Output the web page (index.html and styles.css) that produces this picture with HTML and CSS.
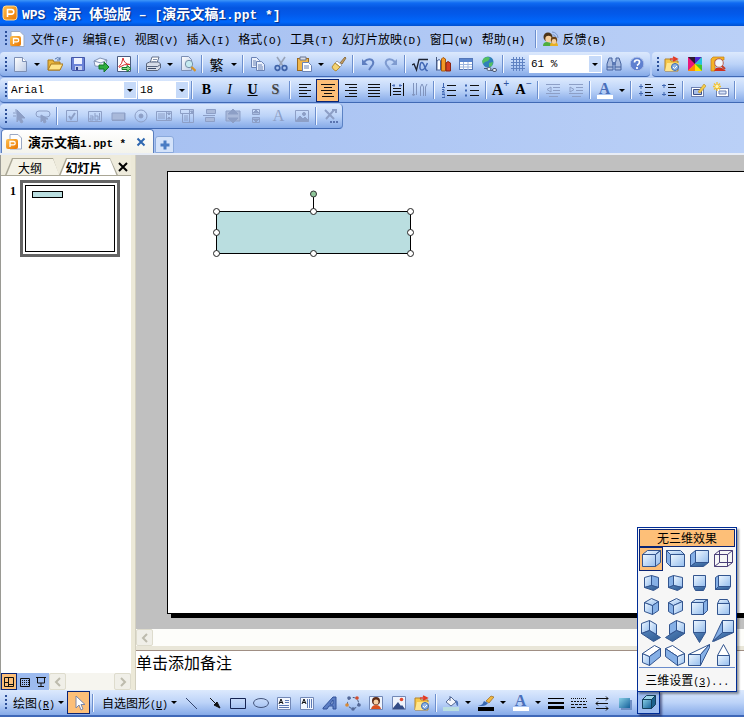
FILE: index.html
```html
<!DOCTYPE html>
<html lang="zh-CN">
<head>
<meta charset="UTF-8">
<meta name="viewport" content="width=device-width, initial-scale=1.0">
<title>WPS 演示</title>
<link rel="stylesheet" href="styles.css">
</head>
<body>

<!-- shared gradients -->
<svg class="defs" width="0" height="0" aria-hidden="true">
	<defs>
		<linearGradient id="face" x1="0" y1="0" x2="1" y2="1"><stop offset="0" stop-color="#f0f8ff"/><stop offset="1" stop-color="#94bdee"/></linearGradient>
		<linearGradient id="dark" x1="0" y1="0" x2="1" y2="1"><stop offset="0" stop-color="#5585bd"/><stop offset="1" stop-color="#2d588f"/></linearGradient>
		<linearGradient id="orange" x1="0" y1="0" x2="1" y2="1"><stop offset="0" stop-color="#ffc04d"/><stop offset="1" stop-color="#e87400"/></linearGradient>
		<linearGradient id="paper" x1="0" y1="0" x2="1" y2="1"><stop offset="0" stop-color="#fff"/><stop offset="1" stop-color="#bccbe6"/></linearGradient>
		<linearGradient id="teal" x1="0" y1="0" x2="1" y2="1"><stop offset="0" stop-color="#8ad0e6"/><stop offset="1" stop-color="#14609a"/></linearGradient>
	</defs>
</svg>

<header class="titlebar">
	<svg viewBox="0 0 16 16"><rect x="1" y="1" width="14" height="14" rx="3" fill="url(#orange)" stroke="#ffd890"/><path d="M5.500 12V4.500h4a2.300 2.300 0 0 1 0 4.600H5.500" fill="none" stroke="#fff" stroke-width="1.600"/></svg>
	<h1><span class="en">WPS </span>演示<span class="en"> </span>体验版<span class="en"> – [</span>演示文稿<span class="en">1.ppt *]</span></h1>
</header>

<nav class="menubar">
	<span class="grip"></span>
	<svg class="doc-icon" viewBox="0 0 16 16"><path d="M2 .5h9l4 4v11H2z" fill="#fff" stroke="#9aa8c4"/><rect x="1" y="5" width="11" height="10" rx="2" fill="url(#orange)"/><path d="M4.500 13V7.500H8a1.700 1.700 0 0 1 0 3.400H4.500" fill="none" stroke="#fff" stroke-width="1.300"/></svg>
	<button>文件<span class="key">(F)</span></button>
	<button>编辑<span class="key">(E)</span></button>
	<button>视图<span class="key">(V)</span></button>
	<button>插入<span class="key">(I)</span></button>
	<button>格式<span class="key">(O)</span></button>
	<button>工具<span class="key">(T)</span></button>
	<button>幻灯片放映<span class="key">(D)</span></button>
	<button>窗口<span class="key">(W)</span></button>
	<button>帮助<span class="key">(H)</span></button>
	<span class="sep"></span>
	<button class="feedback"><svg viewBox="0 0 16 16"><path d="M9 1a6 6 0 0 1 6 6M9.500 3.500A4 4 0 0 1 13 7" fill="none" stroke="#7895c8"/><path d="M0 15q0-4 4-4t5 4z" fill="#4fae3c"/><path d="M7 15q0-4 4-4t4 4z" fill="#e8b020"/><circle cx="5" cy="6" r="4.500" fill="#4d3418"/><circle cx="5.500" cy="8" r="3.200" fill="#f6cf9c"/><circle cx="11" cy="9" r="3.200" fill="#6b4418"/><circle cx="11" cy="10.500" r="2.400" fill="#f6cf9c"/></svg><span>反馈<span class="key">(B)</span></span></button>
</nav>

<!-- standard toolbar -->
<div class="row">
<div class="toolbar">
	<span class="grip"></span>
	<button class="tb" aria-label="新建"><svg viewBox="0 0 16 16"><path d="M2.500 1.500h8l4 4v10h-12z" fill="url(#paper)" stroke="#7c8fb4"/><path d="M10.500 1.500v4h4" fill="#fff" stroke="#7c8fb4"/></svg></button>
	<button class="drop" aria-label="新建选项"></button>
	<button class="tb" aria-label="打开"><svg viewBox="0 0 16 16"><path d="M1 14V4h5l1 2h6v8z" fill="#e9b53c" stroke="#a9781c"/><path d="M1 14l3-6h12l-3 6z" fill="#ffe48a" stroke="#a9781c"/><path d="M8 3q3-3 5 0m0-2v3h-3" fill="none" stroke="#5677aa"/></svg></button>
	<button class="tb" aria-label="保存"><svg viewBox="0 0 16 16"><path d="M1.500 1.500h13v13h-12l-1-1z" fill="#6c84d8" stroke="#4558a8"/><path d="M4 2h8v6H4z" fill="#eef2ff"/><path d="M5 10h7v4H5z" fill="#c9d2ee"/><path d="M6 11h2v3H6z" fill="#33448c"/></svg></button>
	<button class="tb" aria-label="邮件"><svg viewBox="0 0 16 16"><path d="M1 5l6-3 7 2-2 7-10-1z" fill="#f6f9ff" stroke="#8193b5"/><path d="M1 5l7 2 6-3" fill="none" stroke="#8193b5"/><path d="M6 9h5V6l5 5-5 5v-3H6z" fill="#2fae3e" stroke="#127526"/></svg></button>
	<button class="tb" aria-label="输出为PDF"><svg viewBox="0 0 16 16"><path d="M1.500.5h13v15h-13z" fill="#fff" stroke="#4b5c80"/><path d="M2.500 11q4-3 4.500-9 1 6 7 6.500-6-1-11 3" fill="none" stroke="#d92b2b"/><path d="M6 11.500h5v-2l4 3-4 3v-2H6z" fill="#8fdc8c" stroke="#137a28"/></svg></button>
	<span class="sep"></span>
	<button class="tb" aria-label="打印"><svg viewBox="0 0 16 16"><path d="M5 7l2-6h7l-2 6" fill="#fff" stroke="#66728a"/><path d="M1.500 7.500l3-1.500h9l2 2v4l-3 2.500h-11z" fill="#d6dce8" stroke="#59657d"/><path d="M1.500 10.500h11l3-2" fill="none" stroke="#59657d"/><path d="M3 12.500h8" stroke="#3a4a68"/><path d="M8 3.500h4M7 5.500h4" stroke="#8794ad"/></svg></button>
	<button class="drop" aria-label="打印选项"></button>
	<button class="tb" aria-label="打印预览"><svg viewBox="0 0 16 16"><path d="M1.500.5h7l3 3v11h-10z" fill="url(#paper)" stroke="#7c8fb4"/><circle cx="9" cy="8" r="3.700" fill="#c5eaf0" stroke="#7690a8"/><path d="M11.500 11l4 4" stroke="#d59429" stroke-width="2.300"/></svg></button>
	<span class="sep"></span>
	<button class="tb glyph">繁</button>
	<button class="drop" aria-label="转换选项"></button>
	<span class="sep"></span>
	<button class="tb" aria-label="复制"><svg viewBox="0 0 16 16" fill="#e9effb" stroke="#6b83b5"><path d="M1.500 1.500h5l3 3v7h-8z"/><path d="M6.500 5.500h5l3 3v6h-8z"/><path d="M3 5h3M3 7h3M3 9h3M8 9h4M8 11h5M8 13h5" fill="none"/></svg></button>
	<button class="tb" aria-label="剪切"><svg viewBox="0 0 16 16" fill="none"><path d="M4 1l6 9M12 1L6 10" stroke="#98a3b8" stroke-width="1.600"/><circle cx="4.500" cy="12" r="2.300" stroke="#3e62a8" stroke-width="1.700"/><circle cx="11.500" cy="12" r="2.300" stroke="#3e62a8" stroke-width="1.700"/></svg></button>
	<button class="tb" aria-label="粘贴"><svg viewBox="0 0 16 16"><rect x="1.500" y="2.500" width="11" height="12" fill="#f0b64a" stroke="#9a6a22"/><path d="M4 1h6v3H4z" fill="#d8dde8" stroke="#6b7690"/><path d="M6.500 6.500h6l3 3v6h-9z" fill="#fff" stroke="#6b83b5"/><path d="M8 10h5M8 12h5" stroke="#6b83b5"/></svg></button>
	<button class="drop" aria-label="粘贴选项"></button>
	<button class="tb" aria-label="格式刷"><svg viewBox="0 0 16 16"><path d="M14 1l1 1-4 6-2-1z" fill="#c9a060" stroke="#8d7044"/><path d="M6 5l5 4-2 2-5-4z" fill="#fff" stroke="#9aa0ae"/><path d="M4 7l5 4-4 4q-3-1-4-4z" fill="#f3d373" stroke="#b48d35"/></svg></button>
	<span class="sep"></span>
	<button class="tb" aria-label="撤销"><svg viewBox="0 0 16 16"><path d="M4 6q4-4 8-2 3 3-1 7l-2 3" fill="none" stroke="#5f7fc0" stroke-width="2"/><path d="M2 3v6h6z" fill="#5f7fc0"/></svg></button>
	<button class="tb" aria-label="恢复"><svg viewBox="0 0 16 16"><path d="M12 6q-4-4-8-2-3 3 1 7l2 3" fill="none" stroke="#7f9bd0" stroke-width="2"/><path d="M14 3v6H8z" fill="#7f9bd0"/></svg></button>
	<span class="sep"></span>
	<button class="tb" aria-label="公式"><svg viewBox="0 0 16 16" fill="none"><path d="M0 9l2-1 2.500 6L7 3.500h9" stroke="#1c2230" stroke-width="1.300"/><path d="M15.500 7q-3 7-5.500 7t-2-4 2-3.500 3 5 2.500 2.500" stroke="#4368b5" stroke-width="1.500"/></svg></button>
	<button class="tb" aria-label="图表"><svg viewBox="0 0 16 16"><path d="M1.500 1v13.500" stroke="#4a5878"/><path d="M2 5l2-1.500 1.500 1V14H2z" fill="#fff" stroke="#48639a"/><path d="M6.500 3L8 1.500 10.500 3v12h-4z" fill="#f29a27" stroke="#a85a10"/><path d="M11 7l2-1.500L15.500 7v8H11z" fill="#d43e24" stroke="#8a2410"/></svg></button>
	<button class="tb" aria-label="表格"><svg viewBox="0 0 16 16"><rect x="1.500" y="2.500" width="13" height="11" fill="#fff" stroke="#5477b8"/><path d="M2 3h12v3H2z" fill="#5c86cf"/><path d="M2 8.500h12M2 11h12M5.500 6v8M10 6v8" stroke="#9db5de"/></svg></button>
	<button class="tb" aria-label="超链接"><svg viewBox="0 0 16 16"><circle cx="7" cy="6" r="5.500" fill="#2f7fb8"/><path d="M3 2q4-2 6 0l-2 3-3 1-2 2-1-3zM8 7l4-1-1 4-3 1z" fill="#54c061"/><path d="M3 12.500h4M9 14.500h5" stroke="#4b5872" stroke-width="1"/><rect x="6" y="11.500" width="4" height="3" rx="1.500" fill="#e8ecf5" stroke="#4b5872"/><rect x="11.500" y="12.500" width="4" height="3" rx="1.500" fill="#e8ecf5" stroke="#4b5872"/></svg></button>
	<span class="sep"></span>
	<button class="tb" aria-label="网格"><svg viewBox="0 0 16 16"><path d="M3.500 1v14M6.500 1v14M9.500 1v14M12.500 1v14M1 3.500h14M1 6.500h14M1 9.500h14M1 12.500h14" stroke="#5f82c2"/></svg></button>
	<label class="combo zoom"><select aria-label="显示比例"><option>61 %</option></select><i></i></label>
	<button class="tb" aria-label="查找"><svg viewBox="0 0 16 16"><path d="M3 2h3v3l1 2v7H1V8zM10 2h3l2 6v6H9V7l1-2z" fill="#a9bce0" stroke="#45639f"/><path d="M6 6h4v3H6z" fill="#5c79b4"/><path d="M1 11h6M9 11h6" stroke="#45639f"/></svg></button>
	<button class="tb" aria-label="帮助"><svg viewBox="0 0 16 16"><circle cx="8" cy="8" r="6.800" fill="#5f80d0" stroke="#a9bde8"/><path d="M5.500 6.500q0-2.500 2.500-2.500t2.500 2-2.500 3.500M8 11v2" fill="none" stroke="#fff" stroke-width="1.700"/></svg></button>
</div>
<div class="toolbar grow">
	<span class="grip"></span>
	<button class="tb" aria-label="素材库"><svg viewBox="0 0 16 16"><path d="M1 15V3h5l1 2h7v10z" fill="#f7c84a" stroke="#b3832a"/><path d="M1 15l2-8h12l-2 8z" fill="#ffe58c"/><path d="M6 3h6M9 1l4 2-4 2" fill="none" stroke="#e23c26" stroke-width="1.500"/><circle cx="11" cy="11" r="3.500" fill="#8fb4e4" stroke="#3d6ab0"/><path d="M9 11l1.500 1.500L13 10" fill="none" stroke="#fff"/></svg></button>
	<button class="tb" aria-label="配色方案"><svg viewBox="0 0 16 16"><path d="M1 1h14v14H1z" fill="#ffe400"/><path d="M1 1h7v7L1 15z" fill="#e9177c"/><path d="M8 1h7L8 8z" fill="#4b28d0"/><path d="M1 1h7v7z" fill="#2b1a30"/><path d="M15 1v8L8 8z" fill="#22c2e0"/><path d="M15 9v6L8 8z" fill="#43c42d"/><path d="M1 15l7-7v7z" fill="#ff8a00"/></svg></button>
	<button class="tb" aria-label="搜索模板"><svg viewBox="0 0 16 16"><path d="M1 15V3l2-2h11v3H5v11z" fill="#f5b326" stroke="#c47f12" stroke-width=".7"/><path d="M4 15l2-3h6l4 3z" fill="#cf2f1e"/><circle cx="9" cy="7" r="4.300" fill="#f1f5fb" stroke="#b86050"/><path d="M12 10l3 3" stroke="#c74028" stroke-width="2"/></svg></button>
</div>
</div>

<!-- format toolbar -->
<div class="row">
<div class="toolbar grow">
	<span class="grip"></span>
	<label class="combo font"><select aria-label="字体"><option>Arial</option></select><i></i></label>
	<label class="combo size"><select aria-label="字号"><option>18</option></select><i></i></label>
	<span class="sep"></span>
	<button class="tb letter"><b>B</b></button>
	<button class="tb letter"><em>I</em></button>
	<button class="tb letter"><b><u>U</u></b></button>
	<button class="tb letter shade"><b>S</b></button>
	<span class="sep"></span>
	<button class="tb" aria-label="左对齐"><svg class="ink" viewBox="0 0 16 16"><path d="M2 2.500h12M2 5.500h8M2 8.500h12M2 11.500h8M2 14.500h12"/></svg></button>
	<button class="tb on" aria-label="居中"><svg class="ink" viewBox="0 0 16 16"><path d="M1 2.500h14M4 5.500h8M1 8.500h14M4 11.500h8M2 14.500h12"/></svg></button>
	<button class="tb" aria-label="右对齐"><svg class="ink" viewBox="0 0 16 16"><path d="M2 2.500h12M6 5.500h8M2 8.500h12M6 11.500h8M2 14.500h12"/></svg></button>
	<button class="tb" aria-label="两端对齐"><svg class="ink" viewBox="0 0 16 16"><path d="M2 2.500h12M2 5.500h12M2 8.500h12M2 11.500h12M2 14.500h12"/></svg></button>
	<button class="tb" aria-label="分散对齐"><svg class="ink" viewBox="0 0 16 16"><path d="M1.500 1v13M14.500 1v13M4 6.500h8M4 9.500h8M4 12.500h8"/><path d="M3 3.500h3M10 3.500h3M5 2v3M11 2v3" stroke="#4a6db5"/></svg></button>
	<button class="tb" aria-label="文字方向"><svg viewBox="0 0 16 16" fill="none" stroke="#8194bd"><path d="M1.500 1v12M4.500 1v12M8.500 14V5l1.500-3 1.500 3v9M13.500 14V5L15 2M0 12l1.500 2L3 12"/></svg></button>
	<span class="sep"></span>
	<button class="tb" aria-label="编号"><svg class="ink" viewBox="0 0 16 16"><path d="M6 3.500h9M6 8.500h9M6 13.500h9"/><path d="M2.500 1v4M1 5.500h3M1 7.500h2v2H1m0 1.500h3M1 12.500h3M3 14h1M1 15.500h3" stroke="#3f66b2"/></svg></button>
	<button class="tb" aria-label="项目符号"><svg class="ink" viewBox="0 0 16 16"><path d="M6 3.500h9M6 8.500h9M6 13.500h9"/><path d="M1 3.500h2M1 8.500h2M1 13.500h2" stroke="#3f66b2" stroke-width="2"/></svg></button>
	<span class="sep"></span>
	<button class="tb letter big"><b>A</b><sup>+</sup></button>
	<button class="tb letter"><b>A</b><sup>−</sup></button>
	<span class="sep"></span>
	<button class="tb" aria-label="减少缩进" disabled><svg class="dim" viewBox="0 0 16 16"><path d="M1 2.500h14M8 5.500h7M8 8.500h7M1 11.500h14M4 14.500h9M6 5L2 7.500 6 10z"/></svg></button>
	<button class="tb" aria-label="增加缩进" disabled><svg class="dim" viewBox="0 0 16 16"><path d="M1 2.500h14M8 5.500h7M8 8.500h7M1 11.500h14M4 14.500h9M2 5l4 2.500L2 10z"/></svg></button>
	<span class="sep"></span>
	<button class="tb colour" aria-label="字体颜色"><span>A</span></button>
	<button class="drop" aria-label="字体颜色选项"></button>
	<span class="sep"></span>
	<button class="tb" aria-label="增加段落间距"><svg class="ink" viewBox="0 0 16 16"><path d="M7 2.500h6M7 5.500h8M7 10.500h6M7 13.500h8"/><path d="M1 4.500h4M3 2v5M1 11.500h4M3 9v5" stroke="#3f66b2"/></svg></button>
	<button class="tb" aria-label="减少段落间距"><svg class="ink" viewBox="0 0 16 16"><path d="M7 2.500h6M7 5.500h8M7 10.500h6M7 13.500h8"/><path d="M1 3.500h4M3 2v4M1 12.500h4M3 10v4" stroke="#3f66b2"/></svg></button>
	<span class="sep"></span>
	<button class="tb" aria-label="设计"><svg viewBox="0 0 16 16"><rect x="1.500" y="5.500" width="12" height="9" fill="#fff" stroke="#6c80b2"/><path d="M3.500 7.500h8v5h-8z" fill="#a9bfe8" stroke="#3a4f88"/><path d="M8 10l6-8 2 2-6 7z" fill="#f5cb4b" stroke="#b9963a" stroke-width=".7"/></svg></button>
	<button class="tb" aria-label="新幻灯片"><svg viewBox="0 0 16 16"><rect x="3.500" y="6.500" width="12" height="8" fill="#fff" stroke="#6c80b2"/><path d="M6 9h7v3H6z" fill="#dbe6fa" stroke="#6c80b2"/><path d="M4 0v9M0 4.500h8M1 1.500l6 6M7 1.500l-6 6" stroke="#f4c02d" stroke-width="1.300"/><circle cx="4" cy="4.500" r="1.700" fill="#fff6b0"/></svg></button>
	<span class="sep"></span>
</div>
</div>

<!-- control toolbox, all disabled -->
<div class="row">
<div class="toolbar short">
	<span class="grip"></span>
	<button class="tb" aria-label="选择" disabled><svg class="dim" viewBox="0 0 16 16"><path d="M5 2l8 8H9l2 4-2 1-2-4-2 3z" class="fill"/><path d="M1 5h4M1 8h3M4 1v3"/></svg></button>
	<button class="tb" aria-label="对象" disabled><svg class="dim" viewBox="0 0 16 16"><rect x="1" y="3" width="14" height="6" rx="3"/><path d="M6 7v7l2-2 1 3 2-1-1-3h3z" class="fill"/></svg></button>
	<span class="sep"></span>
	<button class="tb" aria-label="复选框" disabled><svg class="dim" viewBox="0 0 16 16"><path d="M2.500 2.500h11v11h-11z"/><path d="M5 8l2 3 4-6" stroke-width="2"/></svg></button>
	<button class="tb" aria-label="文本框" disabled><svg class="dim" viewBox="0 0 16 16"><path d="M1.500 3.500h13v10h-13zM3 8h3v4H3v-2h3M8 5v7h3V8H8M12.500 5v7"/></svg></button>
	<button class="tb" aria-label="按钮" disabled><svg class="dim" viewBox="0 0 16 16"><path d="M2 5h13v7H2z" class="soft"/><path d="M2 12.500h12.500V5"/></svg></button>
	<button class="tb" aria-label="单选" disabled><svg class="dim" viewBox="0 0 16 16"><circle cx="8" cy="8" r="6"/><circle cx="8" cy="8" r="2" class="fill"/></svg></button>
	<button class="tb" aria-label="列表框" disabled><svg class="dim" viewBox="0 0 16 16"><path d="M.5 3.500h15v9H.5zM10.500 3v10M2 6h7M2 8h7M2 10h7"/><path d="M11.500 5h3L13 7zM11.500 11h3L13 9z" class="fill"/></svg></button>
	<button class="tb" aria-label="组合框" disabled><svg class="dim" viewBox="0 0 16 16"><path d="M1.500 1.500h13v4h-13zM3.500 5.500h11v9h-11zM10.500 1v14M5 8h4M5 10h4M5 12h4"/><path d="M11.500 3h3L13 5z" class="fill"/></svg></button>
	<button class="tb" aria-label="切换按钮" disabled><svg class="dim" viewBox="0 0 16 16"><path d="M4.500 1.500h9v4h-9zM3.500 9.500h9v4h-9z" class="soft"/><path d="M1 7.500h12"/></svg></button>
	<button class="tb" aria-label="数值调节" disabled><svg class="dim" viewBox="0 0 16 16"><path d="M1 3h14v10H1z" class="soft"/><path d="M8 1l5 5H3zM8 15l5-5H3z" class="fill"/></svg></button>
	<button class="tb" aria-label="滚动条" disabled><svg class="dim" viewBox="0 0 16 16"><path d="M4.500 1.500h7v5h-7zM4.500 9.500h7v5h-7z"/><path d="M8 2l3 3H5zM8 14l3-3H5z" class="fill"/></svg></button>
	<button class="tb letter faded" disabled>A</button>
	<button class="tb" aria-label="图像" disabled><svg class="dim" viewBox="0 0 16 16"><path d="M1.500 2.500h13v11h-13z"/><path d="M2 13l4-5 3 3 2-2 4 4z" class="fill"/><circle cx="10" cy="6" r="1.500" class="fill"/></svg></button>
	<span class="sep"></span>
	<button class="tb" aria-label="其他控件" disabled><svg class="dim" viewBox="0 0 16 16"><path d="M2 2l9 9M11 2l-8 9M9 2h4v3" stroke-width="2"/><path d="M7 14h2M10 14h2M13 14h2" stroke-width="2" stroke="#5a74b0"/></svg></button>
</div>
</div>

<!-- document tabs -->
<div class="doctabs">
	<div class="doctab">
		<svg viewBox="0 0 16 16"><path d="M4 .5h8l3.500 3.500v11H4z" fill="#fff" stroke="#9aa8c4"/><rect x="0" y="5" width="12" height="10" rx="2" fill="url(#orange)"/><path d="M4 13V7.500h3.500a1.700 1.700 0 0 1 0 3.400H4" fill="none" stroke="#fff" stroke-width="1.300"/></svg>
		<strong>演示文稿<span>1.ppt *</span></strong>
		<button aria-label="关闭文档"><svg viewBox="0 0 10 10"><path d="M1.500 1.500l7 7M8.500 1.500l-7 7" stroke="#2d66b0" stroke-width="2"/></svg></button>
	</div>
	<button class="newtab" aria-label="新建标签"><svg viewBox="0 0 10 10"><path d="M5 .5v9M.5 5h9" stroke="#4a7cc4" stroke-width="3"/></svg></button>
</div>

<main class="workspace">
	<aside class="side">
		<div class="sidetabs">
			<button class="outline">大纲</button>
			<button class="slides">幻灯片</button>
			<button class="close" aria-label="关闭"><svg viewBox="0 0 10 10"><path d="M1 1l8 8M9 1L1 9" stroke="#000" stroke-width="2"/></svg></button>
		</div>
		<div class="thumbs">
			<b>1</b>
			<div class="thumb"><svg viewBox="0 0 90 67"><rect x=".5" y=".5" width="89" height="66" fill="#fff" stroke="#000"/><rect x="7.500" y="6.500" width="30" height="6" fill="#badee0" stroke="#000"/></svg></div>
		</div>
		<div class="views">
			<button class="on" aria-label="普通视图"><svg class="ink" viewBox="0 0 12 12"><path d="M1.500 1.500h9v9h-9zM5.500 1v9M1 6.500h4M6 8.500h4"/></svg></button>
			<button aria-label="浏览视图"><svg class="ink" viewBox="0 0 12 12"><path d="M1.500 2.500h9v8h-9z"/><path d="M3 4.500h7M3 6.500h7M3 8.500h7" stroke-dasharray="1 1"/></svg></button>
			<button aria-label="放映"><svg class="ink" viewBox="0 0 12 12"><path d="M1 1.500h10M2.500 2v5h7V2M6 7v3M3 10.500h6"/></svg></button>
			<div class="scroll"><button aria-label="向左"><svg viewBox="0 0 10 10"><path d="M7 1L3 5l4 4"/></svg></button><button aria-label="向右"><svg viewBox="0 0 10 10"><path d="M3 1l4 4-4 4"/></svg></button></div>
		</div>
	</aside>

	<section class="editor">
		<div class="canvas">
			<div class="slide">
				<svg class="shape" viewBox="0 0 204 68">
					<rect x="4.500" y="21.500" width="194" height="42" fill="#badee0" stroke="#000"/>
					<path d="M101.500 4v18" stroke="#000"/>
					<circle cx="101.500" cy="4" r="3" fill="#8fc79a" stroke="#333"/>
					<g fill="#fff" stroke="#222">
						<circle cx="4.500" cy="21.500" r="3"/><circle cx="101.500" cy="21.500" r="3"/><circle cx="198.500" cy="21.500" r="3"/>
						<circle cx="4.500" cy="42.500" r="3"/><circle cx="198.500" cy="42.500" r="3"/>
						<circle cx="4.500" cy="63.500" r="3"/><circle cx="101.500" cy="63.500" r="3"/><circle cx="198.500" cy="63.500" r="3"/>
					</g>
				</svg>
			</div>
		</div>
		<div class="scroll hbar"><button aria-label="向左"><svg viewBox="0 0 10 10"><path d="M7 1L3 5l4 4"/></svg></button></div>
		<div class="notes">单击添加备注</div>
	</section>
</main>

<!-- drawing toolbar -->
<footer class="toolbar drawbar">
	<span class="grip"></span>
	<button class="menu">绘图<span class="key">(<u>R</u>)</span></button>
	<button class="drop" aria-label="绘图选项"></button>
	<button class="tb on" aria-label="选择对象"><svg viewBox="0 0 16 16"><path d="M5 1v12l3-3 2 5 2-1-2-4.500h4z" fill="#fff" stroke="#7c86a8"/></svg></button>
	<span class="sep"></span>
	<button class="menu shapes">自选图形<span class="key">(<u>U</u>)</span></button>
	<button class="drop" aria-label="自选图形选项"></button>
	<button class="tb" aria-label="直线"><svg viewBox="0 0 16 16"><path d="M2 3l11 11" stroke="#33456e"/></svg></button>
	<button class="tb" aria-label="箭头"><svg viewBox="0 0 16 16"><path d="M3 3l7 7" stroke="#111"/><path d="M13 13L7 10l3-3z" fill="#111" stroke="#111"/></svg></button>
	<button class="tb" aria-label="矩形"><svg viewBox="0 0 16 16"><path d="M.5 3.500h15v10H.5z" fill="none" stroke="#152452"/></svg></button>
	<button class="tb" aria-label="椭圆"><svg viewBox="0 0 16 16"><ellipse cx="8" cy="8" rx="7.500" ry="4.500" fill="none" stroke="#44557c"/></svg></button>
	<button class="tb" aria-label="文本框"><svg viewBox="0 0 16 16"><path d="M1.500 2.500h13v12h-13z" fill="#f3f7ff" stroke="#7288b6"/><path d="M3 9l2-5 2 5M4 7.500h2" fill="none" stroke="#111"/><path d="M9 5.500h4M9 7.500h4M3 10.500h10M3 12.500h10" stroke="#5c79b4"/></svg></button>
	<button class="tb" aria-label="竖排文本框"><svg viewBox="0 0 16 16"><path d="M1.500 2.500h13v12h-13z" fill="#f3f7ff" stroke="#7288b6"/><path d="M3 9l2-5 2 5M4 7.500h2" fill="none" stroke="#111"/><path d="M8.500 4v9M10.500 4v9M12.500 4v9" stroke="#5c79b4"/></svg></button>
	<button class="tb" aria-label="艺术字"><svg viewBox="0 0 16 16"><path d="M1 13L11 2h3v12h-3v-3H7l-2 3H1zM8 9h3V5z" fill="#5c7ec4" stroke="#33539a" fill-rule="evenodd"/></svg></button>
	<button class="tb" aria-label="图示"><svg viewBox="0 0 16 16"><circle cx="8" cy="8" r="5.500" fill="none" stroke="#46587c" stroke-dasharray="3 2"/><circle cx="4" cy="3" r="1.800" fill="#54699a"/><circle cx="12" cy="3" r="1.800" fill="#d14d30"/><circle cx="14" cy="10" r="1.800" fill="#54699a"/><circle cx="8" cy="14" r="1.800" fill="#54699a"/><circle cx="2" cy="10" r="1.800" fill="#d98a36"/></svg></button>
	<button class="tb" aria-label="剪贴画"><svg viewBox="0 0 16 16"><path d="M1.500 1.500h13v13h-13z" fill="#eef3fc" stroke="#7288b6"/><path d="M3 14q1-4 5-4t5 4z" fill="#d9501f"/><circle cx="8" cy="6" r="4" fill="#5c2a16"/><circle cx="8" cy="7" r="2.500" fill="#f6cfa2"/></svg></button>
	<button class="tb" aria-label="图片"><svg viewBox="0 0 16 16"><path d="M1.500 1.500h13v13h-13z" fill="#eef3fc" stroke="#7288b6"/><path d="M2 13l5-6 3 4 1-1 3 4H2z" fill="#334c86"/><circle cx="10.500" cy="4.500" r="1.800" fill="#e2482c"/></svg></button>
	<button class="tb" aria-label="素材"><svg viewBox="0 0 16 16"><path d="M1 15V3h5l1 2h7v10z" fill="#f7c84a" stroke="#b3832a"/><path d="M1 15l2-8h12l-2 8z" fill="#ffe58c"/><path d="M6 3h6M9 1l4 2-4 2" fill="none" stroke="#e23c26" stroke-width="1.500"/><circle cx="11" cy="11" r="3.500" fill="#8fb4e4" stroke="#3d6ab0"/><path d="M9 11l1.500 1.500L13 10" fill="none" stroke="#fff"/></svg></button>
	<span class="sep"></span>
	<button class="tb" aria-label="填充颜色"><svg viewBox="0 0 16 16"><path d="M0 12h16v4H0z" fill="#badee0"/><path d="M3 7l5-5 5 5-5 4z" fill="#f4f7fd" stroke="#566b96"/><path d="M7 6V1" stroke="#566b96"/><path d="M12 5q4 0 3 6-2 0-2-4z" fill="#4d74ba"/></svg></button>
	<button class="drop" aria-label="填充选项"></button>
	<button class="tb" aria-label="线条颜色"><svg viewBox="0 0 16 16"><path d="M0 12h16v4H0z" fill="#000"/><path d="M8 6l5-5 3 1-5 6z" fill="#efb640" stroke="#9a6a22" stroke-width=".7"/><path d="M3 10q2-1 3-4l4 2q-2 3-6 3H0z" fill="#3868b0"/></svg></button>
	<button class="drop" aria-label="线条选项"></button>
	<button class="tb colour" aria-label="字体颜色"><span>A</span></button>
	<button class="drop" aria-label="字体颜色选项"></button>
	<button class="tb" aria-label="线型"><svg viewBox="0 0 16 16"><path d="M0 3.500h16" stroke="#000"/><path d="M0 8h16" stroke="#000" stroke-width="2"/><path d="M0 12.500h16" stroke="#000" stroke-width="3"/></svg></button>
	<button class="tb" aria-label="虚线线型"><svg class="ink" viewBox="0 0 16 16"><path d="M0 3.500h16" stroke-dasharray="1 1"/><path d="M0 6.500h16" stroke-dasharray="2 1"/><path d="M0 9.500h16" stroke-dasharray="3 1"/><path d="M0 12.500h16" stroke-dasharray="4 2"/></svg></button>
	<button class="tb" aria-label="箭头样式"><svg class="ink" viewBox="0 0 16 16"><path d="M2 3.500h12M12 1.500l2 2-2 2M2 8.500h12M4 6.500l-2 2 2 2M2 13.500h12M12 11.500l2 2-2 2"/></svg></button>
	<button class="tb" aria-label="阴影"><svg viewBox="0 0 16 16"><path d="M4 5h11v10H4z" fill="#6f8fc4"/><path d="M2 3h11v10H2z" fill="url(#teal)"/></svg></button>
	<div class="threed">
		<button class="tb open" aria-label="三维效果"><svg viewBox="0 0 16 16" stroke="#14405c"><path d="M1.500 5.500h9v9h-9z" fill="url(#teal)"/><path d="M1.500 5.500l4-4h9l-4 4z" fill="#9fd6e8"/><path d="M10.500 5.500l4-4v9l-4 4z" fill="#1d628c"/></svg></button>
		<div class="popup">
			<button class="none">无三维效果</button>
			<div class="grid">
				<button class="on" aria-label="样式1"><svg viewBox="0 0 24 24"><path d="M3.500 7.500h13v12h-13z"/><path d="M3.500 7.500l5-4h13l-5 4zM16.500 7.500l5-4v12l-5 4z"/></svg></button>
				<button aria-label="样式2"><svg viewBox="0 0 24 24"><path d="M7.500 7.500h14v12h-14z"/><path d="M7.500 7.500l-4-4h14l4 4z"/><path class="m" d="M3.500 3.500l4 4v12l-4-4z"/></svg></button>
				<button aria-label="样式3"><svg viewBox="0 0 24 24"><path d="M8.500 3.500h13v12h-13z"/><path class="m" d="M8.500 3.500l-5 4v12l5-4z"/><path class="d" d="M8.500 15.500h13l-5 4h-13z"/></svg></button>
				<button aria-label="样式4"><svg class="wire" viewBox="0 0 24 24"><path d="M3.500 7.500h13v12h-13zM8.500 3.500h13v12h-13zM3.500 7.500l5-4M16.500 7.500l5-4M3.500 19.500l5-4M16.500 19.500l5-4"/></svg></button>

				<button aria-label="样式5"><svg viewBox="0 0 24 24"><path d="M5.500 6.500l7-2v10l-7 2z"/><path class="m" d="M12.500 4.500l7 2v10l-7-2z"/><path class="d" d="M5.500 16.500l7-2 7 2-5 3z"/></svg></button>
				<button aria-label="样式6"><svg viewBox="0 0 24 24"><path class="m" d="M5.500 6.500l5-2v10l-5 2z"/><path d="M10.500 4.500l9 2v10l-9-2z"/><path class="d" d="M5.500 16.500l5-2 9 2-5 3z"/></svg></button>
				<button aria-label="样式7"><svg viewBox="0 0 24 24"><path d="M6.500 4.500h12v11h-12z"/><path class="d" d="M6.500 15.500h12l-2 4h-8z"/></svg></button>
				<button aria-label="样式8"><svg viewBox="0 0 24 24"><path d="M7.500 4.500h12v11h-12z"/><path class="m" d="M7.500 4.500l-3 2v12l3-3z"/><path class="d" d="M7.500 15.500h12l-2 3h-13z"/></svg></button>

				<button aria-label="样式9"><svg viewBox="0 0 24 24"><path d="M5.500 7.500l8 3v9l-8-3z"/><path d="M5.500 7.500l7-4 7 3-6 4z"/><path class="m" d="M13.500 10.500l6-4v9l-6 4z"/></svg></button>
				<button aria-label="样式10"><svg viewBox="0 0 24 24"><path class="m" d="M5.500 7.500l5 3v9l-5-3z"/><path d="M5.500 7.500l8-4 6 3-9 4z"/><path d="M10.500 10.500l9-4v9l-9 4z"/></svg></button>
				<button aria-label="样式11"><svg viewBox="0 0 24 24"><path d="M4.500 7.500h12v12h-12z"/><path d="M4.500 7.500l4-3h12l-4 3z"/><path class="m" d="M16.500 7.500l4-3v11l-4 4z"/></svg></button>
				<button aria-label="样式12"><svg viewBox="0 0 24 24"><path d="M6.500 8.500h12v11h-12z"/><path d="M6.500 8.500l2-4h8l2 4z"/></svg></button>

				<button aria-label="样式13"><svg viewBox="0 0 24 24"><path d="M2.500 4.500l8-3v10l-8 3z"/><path d="M10.500 1.500l7 4v10l-7-4z"/><path class="d" d="M2.500 14.500l8-3 11 7-7 4z"/></svg></button>
				<button aria-label="样式14"><svg viewBox="0 0 24 24"><path d="M13.500 1.500l8 3v10l-8-3z"/><path class="m" d="M13.500 1.500l-7 4v10l7-4z"/><path class="d" d="M21.500 14.500l-8-3-11 7 7 4z"/></svg></button>
				<button aria-label="样式15"><svg viewBox="0 0 24 24"><path d="M6.500 1.500h12v12h-12z"/><path class="d" d="M6.500 13.500h12l-6 10z"/></svg></button>
				<button aria-label="样式16"><svg viewBox="0 0 24 24"><path class="d" d="M11.500 13.500h11l-20 9z"/><path class="m" d="M11.500 1.500v12l-10 9z"/><path d="M11.500 1.500h11v12h-11z"/></svg></button>

				<button aria-label="样式17"><svg viewBox="0 0 24 24"><path d="M3.500 10.500l7 3v9l-7-3z"/><path class="w" d="M3.500 10.500l12-8 6 3-11 8z"/><path class="m" d="M10.500 13.500l11-8v8l-11 9z"/></svg></button>
				<button aria-label="样式18"><svg viewBox="0 0 24 24"><path d="M21.500 10.500l-7 3v9l7-3z"/><path class="w" d="M21.500 10.500l-12-8-7 3 12 8z"/><path class="m" d="M14.500 13.500l-12-8v8l12 9z"/></svg></button>
				<button aria-label="样式19"><svg viewBox="0 0 24 24"><path class="w" d="M1.500 11.500l21-10-9 10z"/><path class="m" d="M13.500 11.500l9-10v3l-9 18z"/><path d="M1.500 11.500h12v11h-12z"/></svg></button>
				<button aria-label="样式20"><svg viewBox="0 0 24 24"><path d="M6.500 12.500h12v10h-12z"/><path class="w" d="M6.500 12.500l6-11 6 11z"/></svg></button>
			</div>
			<button class="settings">三维设置<span class="key">(<u>3</u>)...</span></button>
		</div>
	</div>
</footer>

</body>
</html>
```

FILE: styles.css
```css
* {
	box-sizing: border-box;
}
body {
	margin: 0;
	height: 100vh;
	display: flex;
	flex-direction: column;
	overflow: hidden;
	font: 12px "Noto Sans CJK SC", sans-serif;
	color: #000;
	background: linear-gradient(90deg, #a2bdf0, #bad0f7);
}
button, select {
	font: inherit;
	color: inherit;
	background: none;
	border: 0;
	padding: 0;
	margin: 0;
}
svg {
	display: block;
	width: 16px;
	height: 16px;
	flex: none;
}
.defs {
	position: absolute;
	width: 0;
	height: 0;
}
.ink {
	fill: none;
	stroke: #111;
}
.dim {
	fill: none;
	stroke: #8d9fc6;
}
.dim .fill {
	fill: #8d9fc6;
}
.dim .soft {
	fill: #a9b9da;
}
.key {
	font: 10px "Liberation Mono", monospace;
}

/* title and menu */
.titlebar {
	height: 26px;
	flex: none;
	display: flex;
	align-items: center;
	gap: 4px;
	padding-left: 2px;
	background: linear-gradient(#3f97f8 0, #0f6af2 3px, #0455e0 8px, #0359ea 14px, #0068fc 22px, #0050cf 26px);
}
.titlebar h1 {
	margin: 0;
	font-size: 14px;
	line-height: 24px;
	color: #fff;
	text-shadow: 1px 1px 1px #0a2d80;
	white-space: pre;
}
.titlebar .en {
	font: bold 13px "Liberation Mono", monospace;
}
.menubar {
	height: 25px;
	flex: none;
	display: flex;
	align-items: center;
}
.menubar button {
	margin-right: 8px;
	white-space: nowrap;
}
.menubar .key {
	font-size: 11px;
}
.menubar .doc-icon {
	margin-right: 6px;
}
.menubar .feedback {
	display: flex;
	align-items: center;
	margin-left: 4px;
}
.feedback svg {
	margin-right: 3px;
}
.menubar .grip {
	width: 9px;
}

/* toolbars */
.row {
	display: flex;
	flex: none;
	margin-top: 1px;
	gap: 2px;
}
.toolbar {
	height: 25px;
	display: flex;
	align-items: center;
	flex: none;
	padding-right: 2px;
	background: linear-gradient(#dce9fd, #bcd3f8 50%, #86aae8);
	border-bottom: 1px solid #4069b4;
	border-radius: 4px;
}
.toolbar.grow {
	flex: 1;
	border-radius: 4px 0 0 4px;
}
.toolbar.short {
	padding-right: 0;
	border-right: 1px solid #5b82c4;
}
.grip {
	width: 8px;
	height: 15px;
	flex: none;
	background: repeating-linear-gradient(#2c4f98 0 2px, transparent 2px 4px) 5px 0 / 2px 15px no-repeat;
}
.sep {
	width: 6px;
	height: 18px;
	flex: none;
	background: linear-gradient(90deg, transparent 2px, #6c8fce 2px 3px, #f2f7ff 3px 4px, transparent 4px);
}
.tb {
	width: 23px;
	height: 23px;
	flex: none;
	display: flex;
	align-items: center;
	justify-content: center;
}
.on {
	background: #fdbf78;
	border: 1px solid #0a2474;
}
.drop {
	width: 12px;
	height: 23px;
	flex: none;
	display: flex;
	align-items: center;
	justify-content: center;
}
.drop::after, .combo i::after {
	content: "";
	border: 3px solid transparent;
	border-top-color: #000;
	border-bottom: 0;
}
.glyph {
	font-size: 14px;
}
.letter {
	font: 14px "Liberation Serif", serif;
}
.letter.big {
	font-size: 16px;
}
.letter.shade {
	color: #444;
	text-shadow: 1px 1px 0 #9fb0cf;
}
.letter.faded {
	color: #8d9fc6;
	font-size: 16px;
}
.letter sup {
	font: 10px/12px "Liberation Mono", monospace;
	color: #2d529c;
	align-self: flex-start;
}
.colour span {
	width: 16px;
	height: 17px;
	border-bottom: 4px solid #fff;
	font: bold 16px/13px "Liberation Serif", serif;
	color: #4a6fba;
	text-align: center;
}
.combo {
	height: 18px;
	display: flex;
	background: #fff;
	font: 11px "Liberation Mono", monospace;
}
.combo select {
	appearance: none;
	flex: 1;
	min-width: 0;
	padding-left: 2px;
}
.combo i {
	width: 12px;
	margin: 1px;
	display: flex;
	align-items: center;
	justify-content: center;
	background: #c6daf9;
}
.zoom {
	width: 73px;
}
.font {
	width: 129px;
	padding-left: 1px;
}
.size {
	width: 51px;
	margin-left: 1px;
}

/* document tabs */
.doctabs {
	height: 26px;
	flex: none;
	display: flex;
	align-items: flex-end;
	padding: 2px 0 0 1px;
	border-bottom: 2px solid #e8edf6;
}
.doctab {
	height: 24px;
	display: flex;
	align-items: center;
	padding: 0 7px 0 4px;
	background: linear-gradient(#fff, #f3f3ec);
	border: 1px solid #5b7fbe;
	border-bottom: 0;
	border-radius: 4px 4px 0 0;
}
.doctab strong {
	margin: 0 10px 0 6px;
	font-size: 13px;
	white-space: nowrap;
}
.doctab strong span {
	font: bold 11px "Liberation Mono", monospace;
}
.doctab button svg, .newtab svg {
	width: 10px;
	height: 10px;
}
.newtab {
	width: 19px;
	height: 17px;
	margin-left: 1px;
	display: flex;
	align-items: center;
	justify-content: center;
	background: #d3e2fa;
	border: 1px solid #8aa9dc;
	border-radius: 3px 3px 0 0;
}

/* work area */
.workspace {
	flex: 1;
	min-height: 0;
	display: flex;
	background: #ece9d8;
}
.side {
	width: 131px;
	flex: none;
	display: flex;
	flex-direction: column;
	background: #fff;
	border-left: 1px solid #9a9a94;
}
.sidetabs {
	height: 21px;
	display: flex;
	align-items: flex-end;
	justify-content: flex-end;
	padding-right: 3px;
	background: #eeebdc;
	border-bottom: 1px solid #a9a695;
}
.sidetabs button {
	height: 17px;
	line-height: 15px;
	border-top: 1px solid #a9a695;
}
.sidetabs .outline {
	width: 54px;
	padding-right: 4px;
	clip-path: polygon(7px 0, 48px 0, 54px 17px, 0 17px);
	background: linear-gradient(248deg, #a9a695 5px, transparent 6px), linear-gradient(112deg, #a9a695 7px, #f4f2e6 8px);
}
.sidetabs .slides {
	width: 59px;
	padding-right: 10px;
	font-weight: bold;
	clip-path: polygon(7px 0, 51px 0, 59px 17px, 0 17px);
	background: linear-gradient(248deg, #a9a695 7px, transparent 8px), linear-gradient(112deg, #a9a695 7px, #fff 8px);
}
.sidetabs .close {
	border: 0;
	display: flex;
	align-items: center;
}
.sidetabs svg {
	width: 10px;
	height: 10px;
}
.thumbs {
	flex: 1;
	display: flex;
	align-items: flex-start;
	padding: 4px 0 0 9px;
}
.thumbs b {
	width: 10px;
	font: bold 12px/22px "Liberation Serif", serif;
}
.thumb {
	border: 3px solid #666;
	padding: 2px;
}
.thumb svg {
	width: 90px;
	height: 67px;
}
.views {
	height: 17px;
	display: flex;
	background: #9dbbef;
}
.views > button {
	width: 16px;
	display: flex;
	align-items: center;
	justify-content: center;
}
.views > button svg {
	width: 12px;
	height: 12px;
}
.scroll {
	flex: 1;
	display: flex;
	justify-content: space-between;
	background: #f6f5ef;
}
.scroll button {
	width: 17px;
	height: 17px;
	display: flex;
	align-items: center;
	justify-content: center;
	background: #f0efe8;
	border: 1px solid #dedccd;
	border-radius: 2px;
}
.scroll svg {
	width: 10px;
	height: 10px;
	fill: none;
	stroke: #bdbbad;
	stroke-width: 2;
}
.editor {
	flex: 1;
	min-width: 0;
	margin-left: 4px;
	display: flex;
	flex-direction: column;
	border-left: 1px solid #d3d0c0;
}
.canvas {
	flex: 1;
	display: flex;
	padding: 16px 0 15px 31px;
	background: #c0c0c0;
	overflow: hidden;
}
.slide {
	flex: 1;
	position: relative;
	background: #fff;
	border: 1px solid #000;
	border-right: 0;
	box-shadow: 4px 4px 0 #000;
}
.shape {
	position: absolute;
	left: 44px;
	top: 18px;
	width: 204px;
	height: 68px;
}
.hbar {
	flex: none;
	height: 21px;
	background: linear-gradient(#fdfdfa 17px, #e9e6d8 17px);
}
.notes {
	height: 40px;
	border-top: 1px solid #a08f84;
	background: #fff;
	font-size: 16px;
	line-height: 22px;
}

/* drawing bar */
.drawbar {
	height: 27px;
	border-radius: 0;
	border-bottom: 2px solid #3f68b8;
}
.drawbar .menu {
	margin-left: 5px;
	white-space: nowrap;
}
.drawbar .shapes {
	margin-left: 6px;
}
.threed {
	position: relative;
	z-index: 2;
	margin-left: 1px;
}
.threed .open {
	background: #9fbdf0;
	border: 1px solid #002d96;
	border-top: 0;
	box-shadow: 2px 2px 2px rgba(0, 0, 50, .5);
}
.popup {
	position: absolute;
	left: 0;
	bottom: calc(100% - 1px);
	width: 100px;
	padding: 1px;
	background: #f6f6f6;
	border: 1px solid #002d96;
	box-shadow: 2px 2px 2px rgba(0, 0, 0, .4);
}
.popup .none {
	display: block;
	width: 100%;
	height: 18px;
	line-height: 16px;
	background: #fdbf78;
	border: 1px solid #0a2474;
}
.grid {
	display: grid;
	grid-template-columns: repeat(4, 24px);
	grid-auto-rows: 24px;
	border-bottom: 1px solid #6a8ccb;
}
.grid button {
	display: flex;
	align-items: center;
	justify-content: center;
}
.grid svg {
	width: 24px;
	height: 24px;
	fill: url(#face);
	stroke: #33558f;
	stroke-linejoin: round;
}
.grid .m {
	fill: #86b0e6;
}
.grid .d {
	fill: url(#dark);
}
.grid .w {
	fill: #fff;
}
.grid .wire {
	fill: none;
	stroke: #4a3f78;
}
.popup .settings {
	display: block;
	height: 22px;
	padding-left: 6px;
	white-space: nowrap;
}
```
